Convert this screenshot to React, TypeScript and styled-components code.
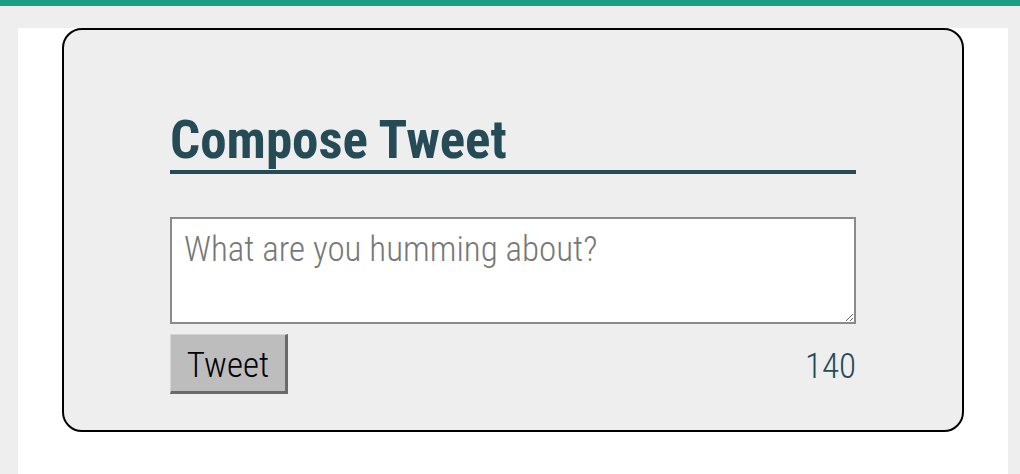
import React from "react";
import styled, { createGlobalStyle } from "styled-components";

const Global = createGlobalStyle`
  html, body { margin: 0; padding: 0; background: #eeeeee; }
  body { font-family: "Roboto Condensed", Roboto, "Noto Sans", sans-serif; border-top: 6px solid #1a9e86; }
`;

const Page = styled.div`
  padding: 22px 12px 0 18px;
`;

const Sheet = styled.main`
  background: #ffffff;
  padding: 0 44px 42px;
`;

const Card = styled.section`
  background: #eeeeee;
  border: 2px solid #000;
  border-radius: 20px;
  padding: 80px 106px 36px;
`;

const Heading = styled.h2`
  margin: 0 0 43px;
  font-family: "Roboto Condensed", Roboto, sans-serif;
  font-weight: 700;
  font-size: 53px;
  line-height: 60px;
  color: #254b56;
  border-bottom: 4px solid #254b56;
`;

const TextArea = styled.textarea`
  display: block;
  box-sizing: border-box;
  width: 100%;
  height: 107px;
  margin: 0;
  padding: 10px 12px 4px;
  border: 2px solid #8a8a8a;
  font-family: "Roboto Condensed", Roboto, sans-serif;
  font-weight: 300;
  font-size: 35px;
  background: #fff;
  &::placeholder { color: #777; }
`;

const Row = styled.div`
  display: flex;
  justify-content: space-between;
  align-items: center;
  margin-top: 10px;
`;

const Button = styled.button`
  box-sizing: border-box;
  height: 60px;
  width: 118px;
  padding: 4px 0 0;
  background: #bdbdbd;
  border-style: solid;
  border-width: 1px 3px 3px 1px;
  border-color: #d4d4d4 #6a6a6a #6a6a6a #d4d4d4;
  font-family: "Roboto Condensed", Roboto, sans-serif;
  font-weight: 300;
  font-size: 35px;
  color: #000;
`;

const Count = styled.span`
  padding-top: 4px;
  font-family: "Roboto Condensed", Roboto, sans-serif;
  font-weight: 300;
  font-size: 35px;
  color: #254b56;
`;

export default function App() {
  return (
    <>
      <Global />
      <Page>
        <Sheet>
          <Card>
            <Heading>Compose Tweet</Heading>
            <TextArea placeholder="What are you humming about?" />
            <Row>
              <Button>Tweet</Button>
              <Count>140</Count>
            </Row>
          </Card>
        </Sheet>
      </Page>
    </>
  );
}
